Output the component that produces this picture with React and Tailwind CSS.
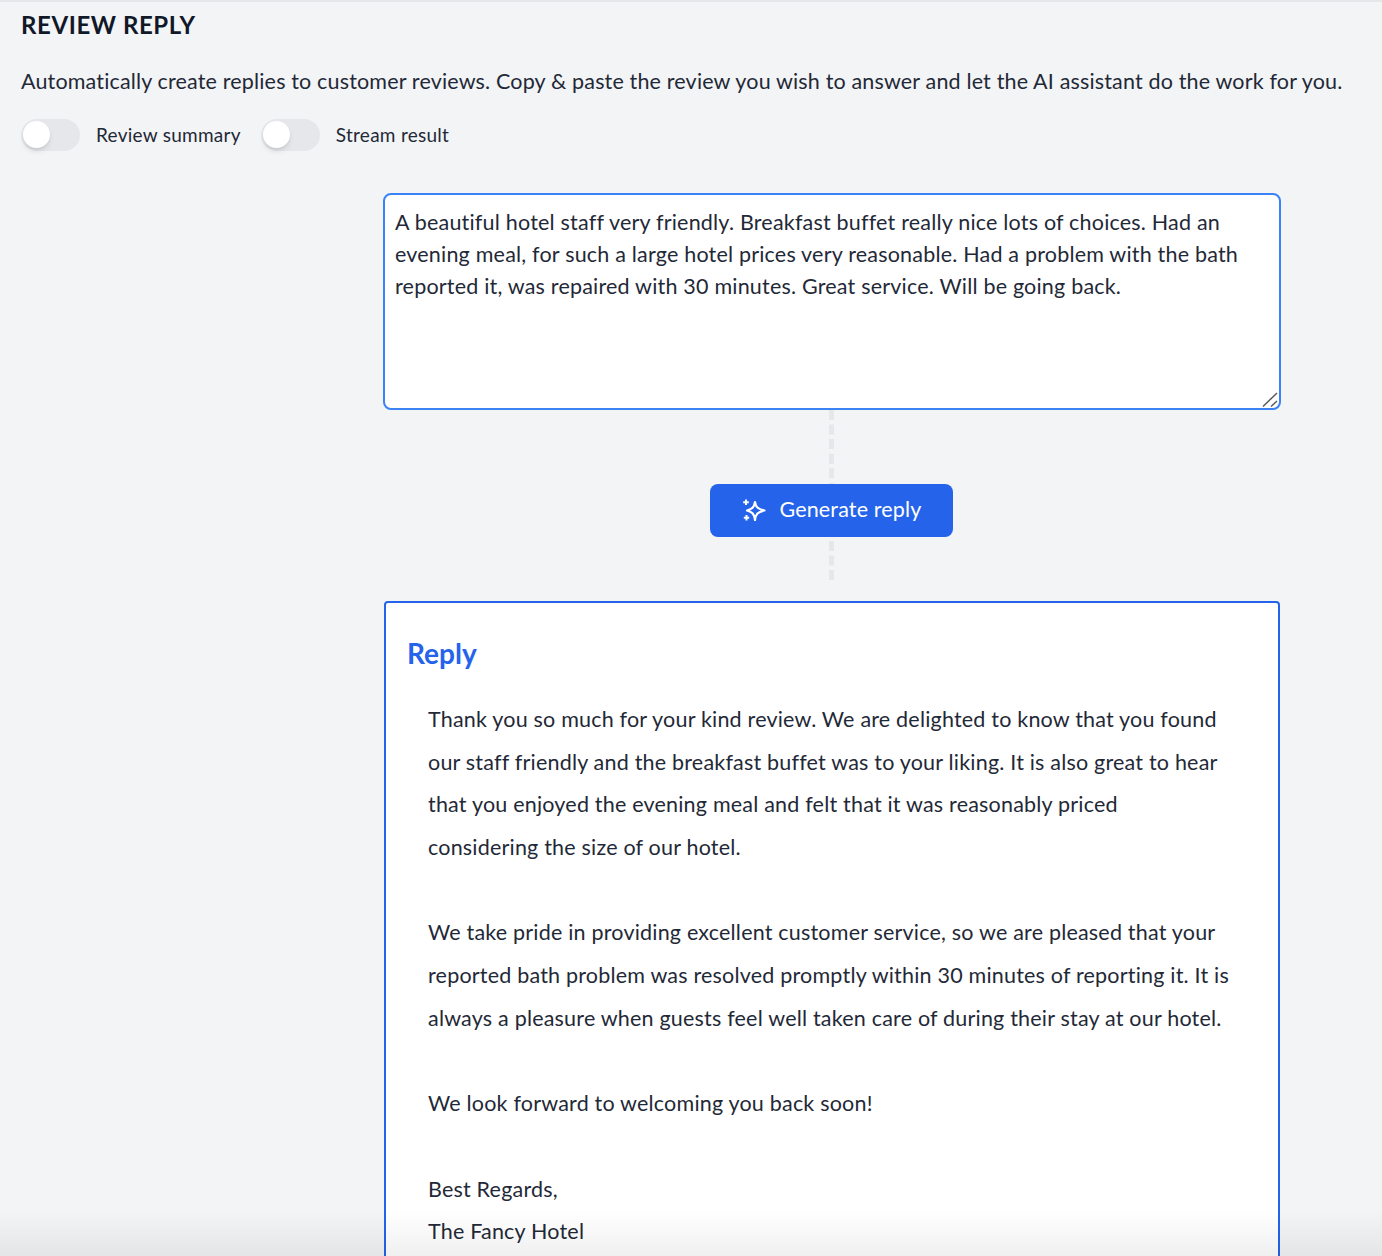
const reviewText = 'A beautiful hotel staff very friendly. Breakfast buffet really nice lots of choices. Had an evening meal, for such a large hotel prices very reasonable. Had a problem with the bath reported it, was repaired with 30 minutes. Great service. Will be going back.'

const replyLines = [
  'Thank you so much for your kind review. We are delighted to know that you found',
  'our staff friendly and the breakfast buffet was to your liking. It is also great to hear',
  'that you enjoyed the evening meal and felt that it was reasonably priced',
  'considering the size of our hotel.',
  '',
  'We take pride in providing excellent customer service, so we are pleased that your',
  'reported bath problem was resolved promptly within 30 minutes of reporting it. It is',
  'always a pleasure when guests feel well taken care of during their stay at our hotel.',
  '',
  'We look forward to welcoming you back soon!',
  '',
  'Best Regards,',
  'The Fancy Hotel',
]

function Toggle({ label }) {
  return (
    <div className="flex items-center">
      <div className="relative h-8 w-[59px] rounded-full bg-gray-200">
        <div className="absolute left-[2px] top-[2px] h-[27px] w-[27px] rounded-full bg-white shadow-md" />
      </div>
      <span className="ml-4 text-[19px] tracking-[0.27px] text-[#1f2937]">{label}</span>
    </div>
  )
}

function SparkleIcon() {
  return (
    <svg width="24" height="24" viewBox="0 0 24 24" fill="none" stroke="white" strokeWidth="2.2" strokeLinejoin="round">
      <path d="M13 4 C13.8 9 15.5 11 22.5 12.5 C15.5 14 13.8 16 13 22 C12.2 16 10.5 14 5 12.5 C10.5 11 12.2 9 13 4 Z" />
      <path d="M4 1.5 V7 M1.2 4.2 H6.8" strokeWidth="2" />
      <path d="M4.5 17 V22.5 M1.8 19.8 H7.2" strokeWidth="2" />
    </svg>
  )
}

export default function App() {
  return (
    <div className="relative h-[1256px] overflow-hidden bg-gray-100 font-['Lato',sans-serif]">
      <div className="h-[2px] bg-gray-200" />
      <div className="pl-[21px] pt-[8px]">
        <h1 className="text-[24px] leading-[30px] font-bold tracking-[0.6px] text-[#111827]">REVIEW REPLY</h1>
        <p className="mt-[26px] text-[21.5px] leading-[30px] tracking-[0.16px] text-[#1f2937]">
          Automatically create replies to customer reviews. Copy &amp; paste the review you wish to answer and let the AI assistant do the work for you.
        </p>
        <div className="mt-[23px] flex gap-[20px]">
          <Toggle label="Review summary" />
          <Toggle label="Stream result" />
        </div>
      </div>

      <div className="mt-[42px] ml-[383px] w-[898px]">
        <div className="relative">
          <textarea
            readOnly
            defaultValue={reviewText}
            className="block h-[217px] w-full resize-none rounded-lg border-2 border-[#3b82f6] bg-white px-[10px] py-[11px] text-[21.5px] leading-[32px] tracking-[0.2px] text-[#1f2937] outline-none"
          />
          <svg className="absolute bottom-[3px] right-[3px]" width="16" height="15" viewBox="0 0 16 15" stroke="#555" strokeWidth="1.4">
            <path d="M1 14.5 L15 1" />
            <path d="M9 14.5 L15 9" />
          </svg>
        </div>
        <div className="relative flex h-[170px] items-center justify-center">
          <div className="absolute left-[446px] top-0 h-full border-l-[5px] border-dashed border-gray-200" />
          <button className="relative mt-[31px] mr-[2px] flex h-[53px] w-[243px] items-center justify-center gap-[13px] rounded-lg bg-[#2563eb] pb-[2px] pl-[2px] text-[21.5px] tracking-[0.15px] text-white">
            <SparkleIcon />
            Generate reply
          </button>
        </div>
        <div className="mt-[21px] ml-px w-[896px] rounded border-2 border-[#2563eb] bg-white pb-[60px] pl-[21px] pt-[32px]">
          <h2 className="text-[28px] leading-[36px] font-bold text-[#2563eb]">Reply</h2>
          <div className="mt-[27px] ml-[21px] text-[21.5px] leading-[42.7px] tracking-[0.2px] text-[#1f2937]">
            {replyLines.map((line, i) => (
              <div key={i} className="h-[42.7px] whitespace-nowrap">{line}</div>
            ))}
          </div>
        </div>
      </div>

      <div className="pointer-events-none absolute inset-x-0 bottom-0 h-[46px] bg-gradient-to-b from-transparent to-black/[0.06]" />
    </div>
  )
}
